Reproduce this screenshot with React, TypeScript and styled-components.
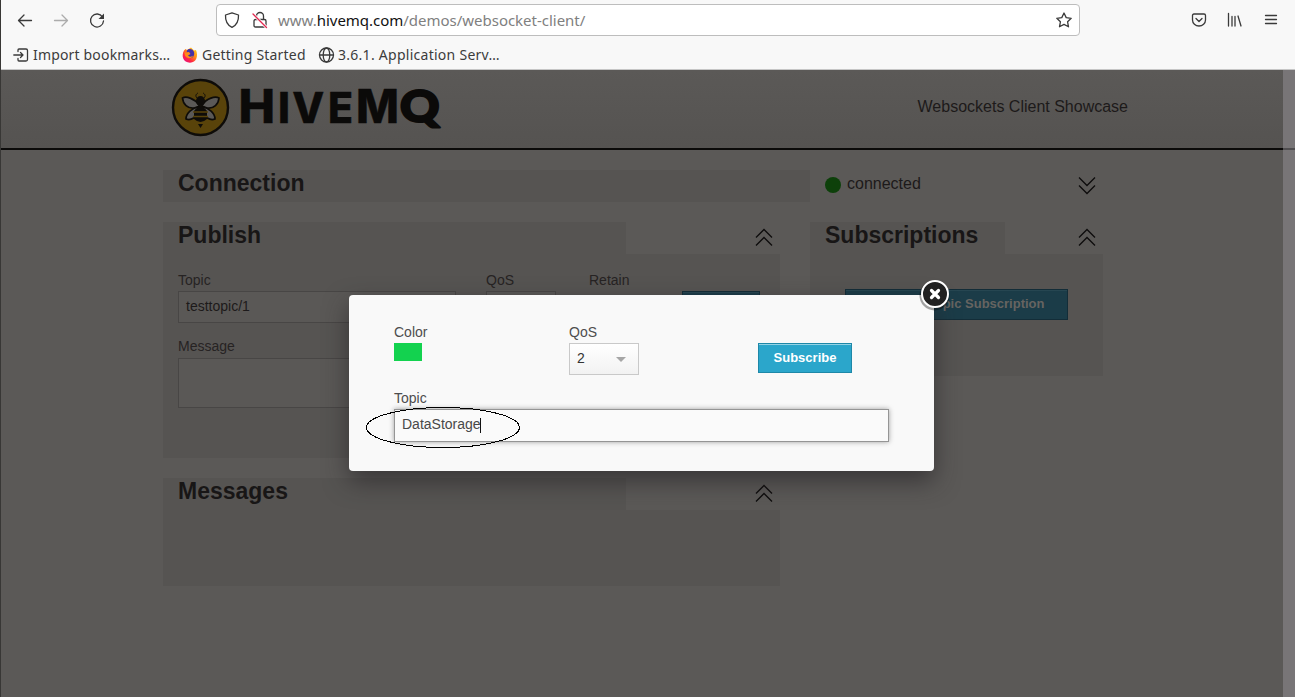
import React from "react";
import styled, { createGlobalStyle, css } from "styled-components";

const Global = createGlobalStyle`
  * { box-sizing: border-box; }
  html, body { margin: 0; padding: 0; overflow: hidden; }
  body { font-family: "Liberation Sans", Arial, sans-serif; background: #5b5957; }
`;

const Window = styled.div`
  width: 1295px;
  height: 697px;
  display: flex;
  flex-direction: column;
  border-left: 1px solid #383735;
  position: relative;
  overflow: hidden;
`;

const Chrome = styled.div`
  height: 70px;
  flex: none;
  background: #f8f8f8;
  border-bottom: 1px solid #c6c6c6;
  font-family: "Noto Sans", "Open Sans", sans-serif;
  color: #3c3c3c;
`;
const Toolbar = styled.div`
  height: 40px;
  display: flex;
  align-items: center;
  padding: 0 16px;
`;
const NavButtons = styled.div`
  width: 199px;
  display: flex;
  gap: 20px;
`;
const Address = styled.div`
  width: 864px;
  height: 32px;
  display: flex;
  align-items: center;
  background: #fff;
  border: 1px solid #bdbdbd;
  border-radius: 4px;
  padding: 0 7px;
`;
const Icon = styled.svg`
  width: 16px;
  height: 16px;
  flex: none;
  display: block;
  fill: none;
  stroke: #3a3a3a;
  stroke-width: 1.3;
  stroke-linecap: round;
  stroke-linejoin: round;
  overflow: visible;
`;
const LockIcon = styled(Icon)`
  margin-left: 12px;
`;
const Url = styled.div`
  flex: 1;
  margin-left: 10px;
  font-size: 15px;
  line-height: 30px;
  letter-spacing: -0.02px;
  color: #808080;
  white-space: nowrap;
`;
const Host = styled.span`
  color: #111;
`;
const Tools = styled.div`
  flex: 1;
  display: flex;
  justify-content: flex-end;
  gap: 20px;
`;
const Bookmarks = styled.div`
  height: 29px;
  display: flex;
  align-items: center;
  padding-left: 12px;
`;
const Bookmark = styled.div<{ $w: number; $ls: number }>`
  display: flex;
  align-items: center;
  gap: 4px;
  width: ${(p) => p.$w}px;
  font-size: 14px;
  line-height: 20px;
  letter-spacing: ${(p) => p.$ls}px;
  white-space: nowrap;
`;

const Viewport = styled.div`
  flex: 1;
  display: flex;
  background: #5b5957;
`;
const Page = styled.main`
  flex: 1;
`;
const Scrollbar = styled.div`
  width: 12px;
  background: linear-gradient(#787577 78px, #4f4d4f 78px, #4f4d4f 80px, #787577 80px);
`;
const Header = styled.header`
  height: 80px;
  display: flex;
  justify-content: space-between;
  padding: 8px 155px 0 170px;
  background: linear-gradient(#5b5957, #555351);
  border-bottom: 2px solid #0b0a09;
`;
const Tagline = styled.div`
  font-size: 16px;
  line-height: 57px;
  color: #1d1a1a;
`;
const Columns = styled.div`
  display: grid;
  grid-template-columns: 617px 293px;
  column-gap: 30px;
  padding-left: 162px;
`;
const Column = styled.div``;
const ConnectionRow = styled.section`
  height: 32px;
  margin: 20px 0 20px 162px;
  width: 940px;
  display: flex;
`;
const Title = styled.h3<{ $w: number }>`
  margin: 0;
  width: ${(p) => p.$w}px;
  height: 32px;
  padding-left: 15px;
  background: #565452;
  color: #181616;
  font-size: 23px;
  line-height: 27px;
  font-weight: 700;
`;
const Status = styled.div`
  flex: 1;
  display: flex;
  justify-content: space-between;
  padding: 0 7px 0 15px;
  font-size: 16px;
  line-height: 28px;
  color: #1d1a1a;
`;
const StatusLabel = styled.div`
  display: flex;
  gap: 6px;
`;
const Dot = styled.span`
  width: 16px;
  height: 16px;
  border-radius: 50%;
  margin-top: 7px;
  background: #0d400a;
`;
const PanelHead = styled.div`
  display: flex;
  justify-content: space-between;
  padding-right: 7px;
`;
const PanelBody = styled.div<{ $h: number }>`
  height: ${(p) => p.$h}px;
  margin-bottom: 20px;
  padding: 16px 20px 0 15px;
  background: #565452;
`;
const ChevronSvg = styled.svg<{ $down?: boolean }>`
  width: 18px;
  height: 20px;
  margin-top: 5px;
  fill: none;
  stroke: #0d0c0c;
  stroke-width: 1.3;
  ${(p) => p.$down && css`
    margin-top: 6px;
    transform: scaleY(-1);
  `}
`;
const FormRow = styled.div`
  display: flex;
  height: 66px;
`;
const Field = styled.div<{ $w: number }>`
  width: ${(p) => p.$w}px;
`;
const Label = styled.div<{ $dark?: boolean }>`
  font-size: 14px;
  line-height: 20px;
  color: ${(p) => (p.$dark ? "#262323" : "#4d4d4d")};
`;
const DimInput = styled.div<{ $w: number; $h: number }>`
  width: ${(p) => p.$w}px;
  height: ${(p) => p.$h}px;
  margin-top: 1px;
  border: 1px solid #484645;
  background: #5a5856;
  padding-left: 7px;
  font-size: 14px;
  line-height: 29px;
  color: #1d1a1a;
`;
const MessageBox = styled(DimInput)`
  margin-top: 2px;
`;
const Button = styled.div<{ $dim?: boolean; $w: number; $h: number }>`
  width: ${(p) => p.$w}px;
  height: ${(p) => p.$h}px;
  text-align: center;
  font-size: 13px;
  line-height: 27px;
  font-weight: 700;
  white-space: nowrap;
  border: 1px solid ${(p) => (p.$dim ? "#132d38" : "#1e88a8")};
  background: ${(p) => (p.$dim ? "#1b3c48" : "#2ba6cb")};
  color: ${(p) => (p.$dim ? "#666461" : "#fff")};
  box-shadow: inset 0 1px 0 ${(p) => (p.$dim ? "#264651" : "#95d3e5")};
`;
const SubscribeWrap = styled.div`
  padding: 19px 0 0 20px;
`;
const ButtonSlot = styled.div`
  padding-top: 21px;
`;

const Modal = styled.div`
  position: absolute;
  left: 348px;
  top: 295px;
  width: 585px;
  height: 176px;
  border-radius: 4px;
  background: #f9f9f9;
  padding: 27px 45px;
  box-shadow: 0 10px 25px rgba(35, 32, 35, 0.62);
`;
const ModalRow = styled.div`
  display: flex;
  height: 66px;
`;
const Swatch = styled.div`
  width: 28px;
  height: 18px;
  margin-top: 1px;
  background: #13d24f;
`;
const Select = styled.div`
  width: 70px;
  height: 32px;
  margin-top: 1px;
  display: flex;
  justify-content: space-between;
  padding: 0 12px 0 7px;
  border: 1px solid #c9c9c9;
  background: linear-gradient(#fff, #f2f2f2);
  font-size: 14px;
  line-height: 28px;
  color: #333;
`;
const Caret = styled.span`
  height: 5px;
  border: 5px solid transparent;
  border-top-color: #a6a6a6;
  border-bottom: 0;
  margin-top: 13px;
`;
const ModalButtonSlot = styled.div`
  padding-top: 21px;
`;
const TopicInput = styled.div`
  height: 33px;
  margin-top: 1px;
  width: 495px;
  display: flex;
  align-items: center;
  border: 1px solid #959595;
  background: #fafafa;
  box-shadow: 0 0 5px #a0a0a0;
  padding: 0 7px 3px;
  font-size: 14px;
  line-height: 28px;
  color: #484848;
`;
const TextCursor = styled.span`
  width: 1px;
  height: 15px;
  margin: 3px 0 0 -1px;
  background: #111;
`;
const Close = styled.svg`
  position: absolute;
  left: 568px;
  top: -19px;
  width: 36px;
  height: 38px;
`;
const Annotation = styled.svg`
  position: absolute;
  left: 16px;
  top: 111px;
  width: 156px;
  height: 43px;
`;
const LogoSvg = styled.svg`
  width: 272px;
  height: 60px;
  display: block;
`;

const Chevron = ({ down }: { down?: boolean }) => (
  <ChevronSvg $down={down} viewBox="0 0 18 20">
    <path d="M1 10.500 9 2.500l8 8M1 18.500l8-8 8 8" />
  </ChevronSvg>
);

const wordmark = [
  { c: "H", x: 67.6, s: 47, w: 36.6, f: "Inter" },
  { c: "I", x: 107, s: 42, w: 12, f: "Inter" },
  { c: "V", x: 121.2, s: 42, w: 32, f: "Inter" },
  { c: "E", x: 157, s: 42, w: 25, f: "Inter" },
  { c: "M", x: 185, s: 47, w: 43, f: "Inter" },
  { c: "Q", x: 229, s: 43.5, w: 39.5, f: "Lato" },
];

const Logo = () => (
  <LogoSvg viewBox="0 0 272 60">
    <circle cx="29.500" cy="29.500" r="27.500" fill="#59430a" stroke="#0e0c09" strokeWidth="2.400" />
    <g stroke="#0e0c09" strokeWidth="1.700" fill="#5b5957">
      <path d="M28 27C23 20 15 18 11.500 20c.5 6 5 11 12 10l5-2Z" />
      <path d="M31 27c5-7 13-9 17-7-.5 6-5 11-12 10l-5-2Z" />
      <path d="M28 29c-7 1-13 6-13 12 5 2 11-2 13-8l2-4Z" />
      <path d="M31 29c7 1 13 6 13 12-5 2-11-2-13-8l-2-4Z" />
    </g>
    <g fill="#0e0c09">
      <ellipse cx="29.500" cy="23" rx="4.500" ry="5" />
      <path d="M23 33q6.500-9 13 0v8q-6.500 6-13 0Z" />
      <path d="M27 46h5l-2.500 4Z" />
    </g>
    <path d="M26 20c-2-2-1-4 1-5M33 20c2-2 1-4-1-5" fill="none" stroke="#0e0c09" />
    <path d="M22 34h15M22 38.500h15" stroke="#59430a" strokeWidth="1.500" />
    {wordmark.map((g) => (
      <text
        key={g.c}
        x={g.x}
        y={g.f === "Lato" ? 44 : 44.8}
        fontFamily={`${g.f}, sans-serif`}
        fontWeight={g.f === "Lato" ? 900 : 800}
        fontSize={g.s}
        textLength={g.w}
        lengthAdjust="spacingAndGlyphs"
        fill="#0b0a09"
        stroke="#0b0a09"
        strokeWidth={g.f === "Lato" ? 2.2 : 0.4}
        strokeLinejoin="round"
      >
        {g.c}
      </text>
    ))}
  </LogoSvg>
);

const Firefox = () => (
  <Icon viewBox="0 0 16 16">
    <defs>
      <linearGradient id="fox" x1="1" y1="0" x2="0.2" y2="1">
        <stop offset="0" stopColor="#ffe226" />
        <stop offset="0.45" stopColor="#ff8a16" />
        <stop offset="0.75" stopColor="#ff2545" />
        <stop offset="1" stopColor="#e5107f" />
      </linearGradient>
    </defs>
    <path d="M2 3.500 3.500 2 5 3l4-2.500 3 3 2-.5c2.500 6 .5 12.500-6 12.700C1 15.500-1 9 2 3.500Z" fill="url(#fox)" stroke="none" />
    <path d="M5 3.500C7 1 11 2 12 5c1 4-2 7-5 6-2-.5-3.500-3-2.500-5Z" fill="#4431a6" stroke="none" />
    <path d="M2.500 5.500 7 5l1.500 2L6 8.500c2 2 4 1 5 0 0 3-6 4-8 0Z" fill="#ff8a16" stroke="none" />
  </Icon>
);

export default function App() {
  return (
    <Window>
      <Global />
      <Chrome>
        <Toolbar>
          <NavButtons>
            <Icon viewBox="0 0 16 16"><path d="M14.500 8.500H2M7 3 1.500 8.500 7 14" /></Icon>
            <Icon viewBox="0 0 16 16" opacity=".4"><path d="M1.500 8.500H14M9 3l5.500 5.500L9 14" /></Icon>
            <Icon viewBox="0 0 16 16">
              <path d="M13.500 5A6.500 6.500 0 1 0 14.500 9" />
              <path d="M15 1.500V7H9.500Z" fill="#3a3a3a" stroke="none" />
            </Icon>
          </NavButtons>
          <Address>
            <Icon viewBox="0 0 16 16"><path d="M8 .8 14.500 3c.3 6-1.500 10-6.500 12.300C3 13 1.200 9 1.500 3Z" /></Icon>
            <LockIcon viewBox="0 0 16 16">
              <path d="M4.500 7V4a3.500 3.500 0 0 1 7 0V7M3.500 7.500h9q1.500 0 1.500 1.500v4.500q0 1.500-1.500 1.500h-9Q2 15 2 13.500V9q0-1.500 1.500-1.500Z" />
              <path d="M1 2 14.500 15.500" stroke="#fff" strokeWidth="3" />
              <path d="M1 2 14.500 15.500" stroke="#e22850" />
            </LockIcon>
            <Url>www.<Host>hivemq.com</Host>/demos/websocket-client/</Url>
            <Icon viewBox="0 0 16 16"><path d="m8 1 2.200 4.600 5 .7-3.600 3.500.9 5L8 12.400l-4.500 2.400.9-5L.8 6.300l5-.7Z" /></Icon>
          </Address>
          <Tools>
            <Icon viewBox="0 0 16 16"><path d="M3 2h10q1.500 0 1.500 1.500V8a6.500 6 0 0 1-13 0V3.500Q1.500 2 3 2ZM5 6.500l3 3 3-3" /></Icon>
            <Icon viewBox="0 0 16 16"><path d="M1.500 1.500v12.500M5 4.500V14M8 4.500V14M11 4l3 10" /></Icon>
            <Icon viewBox="0 0 16 16"><path d="M2.500 3.500h11M2.500 7.500h11M2.500 11.500h11" /></Icon>
          </Tools>
        </Toolbar>
        <Bookmarks>
          <Bookmark $w={169} $ls={0.17}>
            <Icon viewBox="0 0 16 16"><path d="M5 4.500V3q0-1 1-1h7q1.500 0 1.500 1.500v9q0 1.500-1.500 1.500H6q-1 0-1-1v-1.500M.8 8H10M7.500 5.500 10 8l-2.500 2.500" /></Icon>
            Import bookmarks…
          </Bookmark>
          <Bookmark $w={136} $ls={0.21}>
            <Firefox />
            Getting Started
          </Bookmark>
          <Bookmark $w={190} $ls={0.27}>
            <Icon viewBox="0 0 16 16"><circle cx="8.500" cy="8" r="7" /><ellipse cx="8.500" cy="8" rx="3.300" ry="7" /><path d="M1.500 8h14" /></Icon>
            3.6.1. Application Serv…
          </Bookmark>
        </Bookmarks>
      </Chrome>
      <Viewport>
        <Page>
          <Header>
            <Logo />
            <Tagline>Websockets Client Showcase</Tagline>
          </Header>
          <ConnectionRow>
            <Title $w={647}>Connection</Title>
            <Status>
              <StatusLabel><Dot />connected</StatusLabel>
              <Chevron down />
            </Status>
          </ConnectionRow>
          <Columns>
            <Column>
              <PanelHead><Title $w={463}>Publish</Title><Chevron /></PanelHead>
              <PanelBody $h={204}>
                <FormRow>
                  <Field $w={308}><Label $dark>Topic</Label><DimInput $w={278} $h={32}>testtopic/1</DimInput></Field>
                  <Field $w={103}><Label $dark>QoS</Label><DimInput $w={70} $h={32}>0</DimInput></Field>
                  <Field $w={93}><Label $dark>Retain</Label></Field>
                  <ButtonSlot><Button $dim $w={78} $h={30}>Publish</Button></ButtonSlot>
                </FormRow>
                <Label $dark>Message</Label>
                <MessageBox $w={582} $h={50} />
              </PanelBody>
              <PanelHead><Title $w={463}>Messages</Title><Chevron /></PanelHead>
              <PanelBody $h={76} />
            </Column>
            <Column>
              <PanelHead><Title $w={195}>Subscriptions</Title><Chevron /></PanelHead>
              <PanelBody $h={122}>
                <SubscribeWrap><Button $dim $w={223} $h={31}>Add New Topic Subscription</Button></SubscribeWrap>
              </PanelBody>
            </Column>
          </Columns>
        </Page>
        <Scrollbar />
      </Viewport>
      <Modal>
        <ModalRow>
          <Field $w={175}><Label>Color</Label><Swatch /></Field>
          <Field $w={189}><Label>QoS</Label><Select>2<Caret /></Select></Field>
          <ModalButtonSlot><Button $w={94} $h={30}>Subscribe</Button></ModalButtonSlot>
        </ModalRow>
        <Label>Topic</Label>
        <TopicInput>DataStorage<TextCursor /></TopicInput>
        <Annotation viewBox="0 0 156 43" shapeRendering="crispEdges">
          <ellipse cx="78" cy="21.500" rx="76.500" ry="20" fill="none" stroke="#000" />
        </Annotation>
        <Close viewBox="0 0 36 38">
          <circle cx="17.500" cy="19.500" r="15" fill="#000" opacity=".35" />
          <circle cx="18" cy="18" r="13" fill="#212121" stroke="#fff" strokeWidth="2" />
          <path d="m14.500 14.500 7 7m0-7-7 7" stroke="#fff" strokeWidth="3.200" strokeLinecap="round" />
        </Close>
      </Modal>
    </Window>
  );
}
